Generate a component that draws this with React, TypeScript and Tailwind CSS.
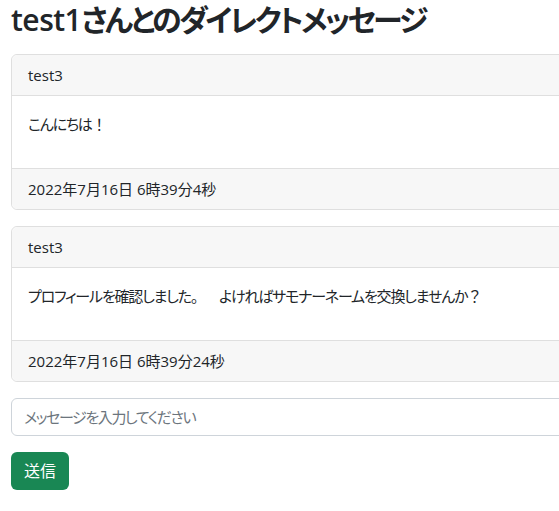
import React from 'react';

type Message = {
  id: number;
  sender: string;
  body: React.ReactNode;
  sentAt: string;
};

const messages: Message[] = [
  {
    id: 1,
    sender: 'test3',
    body: (
      <>
        こんにちは<span className="[font-feature-settings:normal]">！</span>
      </>
    ),
    sentAt: '2022年7月16日 6時39分4秒',
  },
  {
    id: 2,
    sender: 'test3',
    body: (
      <>
        プロフィールを確認しました。<span className="inline-block w-[22px]">　</span>よければサモナーネームを交換しませんか<span className="[font-feature-settings:normal]">？</span>
      </>
    ),
    sentAt: '2022年7月16日 6時39分24秒',
  },
];

function MessageCard({ message }: { message: Message }) {
  return (
    <div className="mb-4 rounded-md border border-[#dfdfdf] bg-white">
      <div className="rounded-t-md border-b border-[#dfdfdf] bg-[#f7f7f7] px-4 py-2">{message.sender}</div>
      <div className="p-4">
        <p className="mb-4 tracking-[-1.2px]">{message.body}</p>
      </div>
      <div className="rounded-b-md border-t border-[#dfdfdf] bg-[#f7f7f7] px-4 py-2">{message.sentAt}</div>
    </div>
  );
}

export default function App() {
  return (
    <div
      className="w-full overflow-hidden bg-white text-[15px] leading-6 text-[#212529] [font-feature-settings:'palt']"
      style={{ fontFamily: '"Open Sans", "Noto Sans CJK JP", sans-serif' }}
    >
      <div className="w-[620px] pl-[11px]">
        <h1 className="mb-[16px] pt-[2px] text-[30px] font-semibold leading-[36px] tracking-[-2.8px]">
          <span className="tracking-[-0.5px]">test1</span>さんとのダイレクトメッセージ
        </h1>

        {messages.map((m) => (
          <MessageCard key={m.id} message={m} />
        ))}

        <input
          type="text"
          placeholder="メッセージを入力してください"
          className="mb-4 block h-[38px] w-full rounded-md border border-[#ced4da] px-3 py-1.5 text-[15px] tracking-[-1.4px] outline-none placeholder:text-[#6c757d]"
        />
        <button className="h-[38px] rounded-md bg-[#198754] px-[13px] text-[16px] text-white">送信</button>
      </div>
    </div>
  );
}
